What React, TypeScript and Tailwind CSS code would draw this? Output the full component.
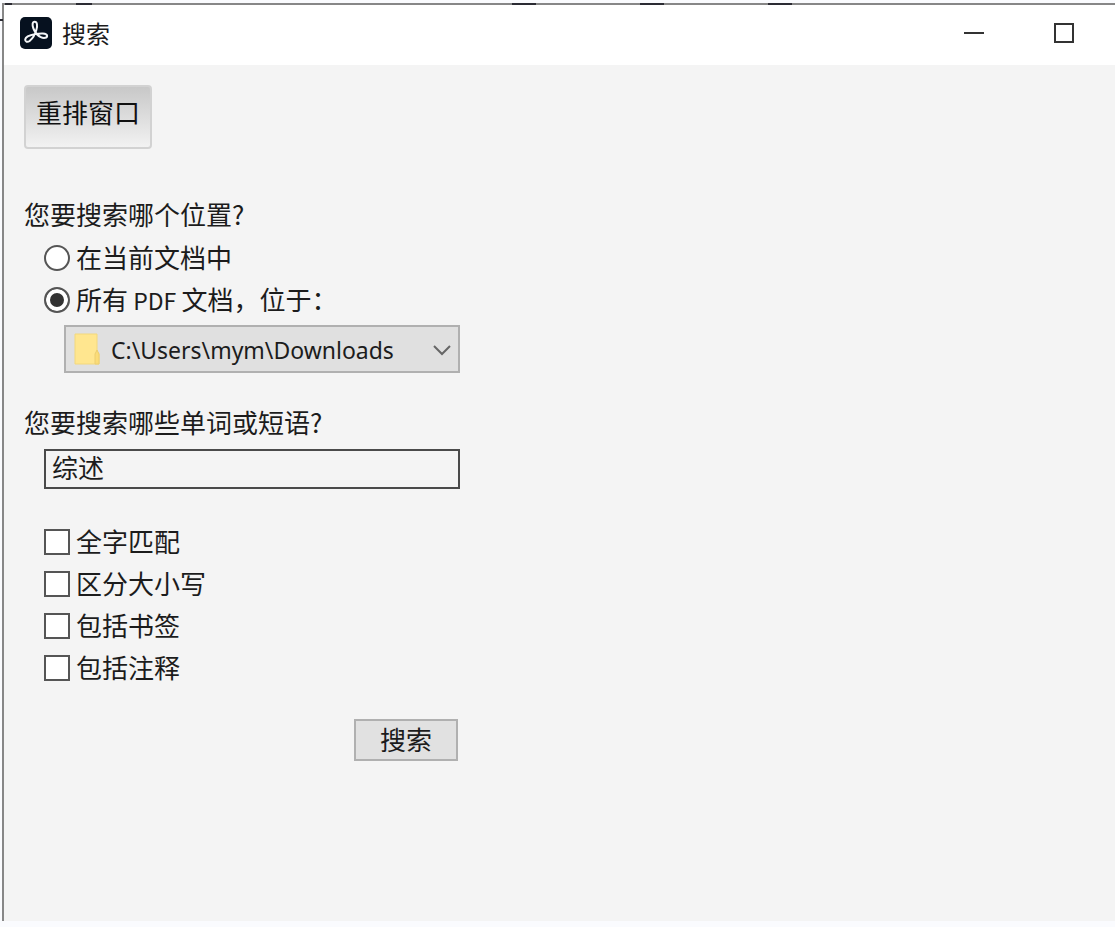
import React, { useState } from 'react';

const options = [
    { id: 'whole', label: '全字匹配' },
    { id: 'case', label: '区分大小写' },
    { id: 'bookmarks', label: '包括书签' },
    { id: 'comments', label: '包括注释' },
];

const radioClass = 'appearance-none w-[26px] h-[26px] shrink-0 rounded-full border-2 border-[#555] bg-white checked:bg-[#333] checked:shadow-[inset_0_0_0_4px_#fff]';

const AcrobatLogo = () => (
    <svg width="32" height="32" viewBox="0 0 32 32" fill="none" aria-hidden="true">
        <rect width="32" height="32" rx="5" fill="#06111f" />
        <path
            d="M13.4 11.500c-1.300-3.200-1.200-6.700 1.300-6.700s2.900 3.500 1.700 8c-1.200 4.500-4.300 9.100-6.800 11.200-2 1.600-4.700.8-4.400-1.500.3-2.500 5.200-4.400 10.200-5.400 4.900-1 11.300-1.300 11.700 1.500.3 2.600-3.600 2.900-6.300 1.500-3.100-1.500-6-5.200-7.400-8.600z"
            stroke="#f4f6f8"
            strokeWidth="2"
            strokeLinejoin="round"
        />
    </svg>
);

const FolderIcon = () => (
    <svg width="28" height="34" viewBox="0 0 28 34" aria-hidden="true">
        <path d="M2 2h22v17l2 3v10H2z" fill="#ffe68f" stroke="#f3d87c" />
        <path d="M22 32V22l2-4 2 4v10z" fill="#fbdc78" stroke="#ecce70" />
    </svg>
);

// Bits of the window behind that show along the top and left edges
const BackdropEdge = () => (
    <svg className="absolute left-0 top-0 pointer-events-none" width="800" height="24" aria-hidden="true">
        <g fill="#2b2b33">
            <rect x="5" y="3" width="7" height="2" />
            <rect x="76" y="3" width="16" height="2" />
            <rect x="512" y="3" width="24" height="2" />
            <rect x="640" y="3" width="24" height="2" />
            <rect x="768" y="3" width="24" height="2" />
            <rect x="0" y="19" width="3" height="2" />
        </g>
    </svg>
);

const App: React.FC = () => {
    const [scope, setScope] = useState('folder');
    const [query, setQuery] = useState('综述');

    return (
        <div className="relative min-h-screen flex flex-col bg-[#fafbfe] pt-[3px] pl-[2px] pb-[6px] font-['Noto_Sans_CJK_SC',sans-serif] text-[26px] text-[#1c1c1c]">
            <div className="flex-1 flex flex-col border-t-2 border-l-2 border-[#878787] bg-[#f4f4f4]">
                <header className="h-[60px] flex items-center bg-white pl-4 pr-[41px] pb-1">
                    <AcrobatLogo />
                    <h1 className="flex-1 ml-[10px] text-2xl">搜索</h1>
                    <div className="flex items-center gap-[70px]">
                        <button aria-label="最小化" className="flex w-5 h-5 items-center">
                            <span className="w-full h-[2px] bg-[#333]"></span>
                        </button>
                        <button aria-label="最大化" className="w-5 h-5 border-2 border-[#333]"></button>
                    </div>
                </header>

                <main className="flex flex-col items-start px-5 pt-5">
                    <button className="h-16 w-32 pb-3 rounded-[4px] border-2 border-[#d2d2d2] bg-linear-to-b from-[#c8c8c8] to-[#f2f2f2] text-[#111] whitespace-nowrap flex items-center justify-center">
                        重排窗口
                    </button>

                    <form className="w-full max-w-[436px] mt-11" onSubmit={e => e.preventDefault()}>
                        <fieldset>
                            <legend className="leading-[42px] pb-[2px]">您要搜索哪个位置?</legend>
                            <label className="h-[42px] ml-5 flex items-center gap-[6px]">
                                <input
                                    type="radio"
                                    name="scope"
                                    checked={scope === 'current'}
                                    onChange={() => setScope('current')}
                                    className={radioClass}
                                />
                                <span className="pb-1">在当前文档中</span>
                            </label>
                            <label className="h-[42px] ml-5 flex items-center gap-[6px]">
                                <input
                                    type="radio"
                                    name="scope"
                                    checked={scope === 'folder'}
                                    onChange={() => setScope('folder')}
                                    className={radioClass}
                                />
                                <span className="pb-1">
                                    所有<span className="text-[23px]"> PDF </span>文档，位于：
                                </span>
                            </label>
                        </fieldset>

                        <div className="relative mt-1 ml-10 h-12">
                            <select
                                aria-label="位置"
                                className="appearance-none w-full h-full pl-[45px] pr-10 pt-[2px] border-2 border-[#b0b0b0] bg-[#e0e0e0] font-['Noto_Sans',sans-serif] text-[23px]"
                            >
                                <option>C:\Users\mym\Downloads</option>
                            </select>
                            <span className="absolute left-[9px] top-[7px] pointer-events-none">
                                <FolderIcon />
                            </span>
                            <svg className="absolute right-[9px] top-[19px] pointer-events-none" width="18" height="12" viewBox="0 0 18 12" fill="none">
                                <path d="M1 2l8 8 8-8" stroke="#666" strokeWidth="2" />
                            </svg>
                        </div>

                        <label htmlFor="query" className="block mt-7 leading-[42px]">
                            您要搜索哪些单词或短语?
                        </label>
                        <div className="mt-[6px] ml-5">
                            <input
                                id="query"
                                type="text"
                                value={query}
                                onChange={e => setQuery(e.target.value)}
                                className="block w-full h-10 px-[6px] pb-[6px] border-2 border-[#4a4a4a] bg-[#f4f4f4]"
                            />
                        </div>

                        <div className="mt-8 ml-5">
                            {options.map(item => (
                                <label key={item.id} className="h-[42px] flex items-center gap-[6px]">
                                    <input
                                        type="checkbox"
                                        className="appearance-none w-[26px] h-[26px] shrink-0 border-2 border-[#555] bg-white checked:bg-[#333]"
                                    />
                                    <span className="pb-1">{item.label}</span>
                                </label>
                            ))}
                        </div>

                        <div className="mt-[30px] pr-[2px] flex justify-end">
                            <button
                                type="submit"
                                className="w-[104px] h-[42px] pb-1 flex items-center justify-center border-2 border-[#b0b0b0] bg-[#e1e1e1]"
                            >
                                搜索
                            </button>
                        </div>
                    </form>
                </main>
            </div>
            <BackdropEdge />
        </div>
    );
};

export default App;
